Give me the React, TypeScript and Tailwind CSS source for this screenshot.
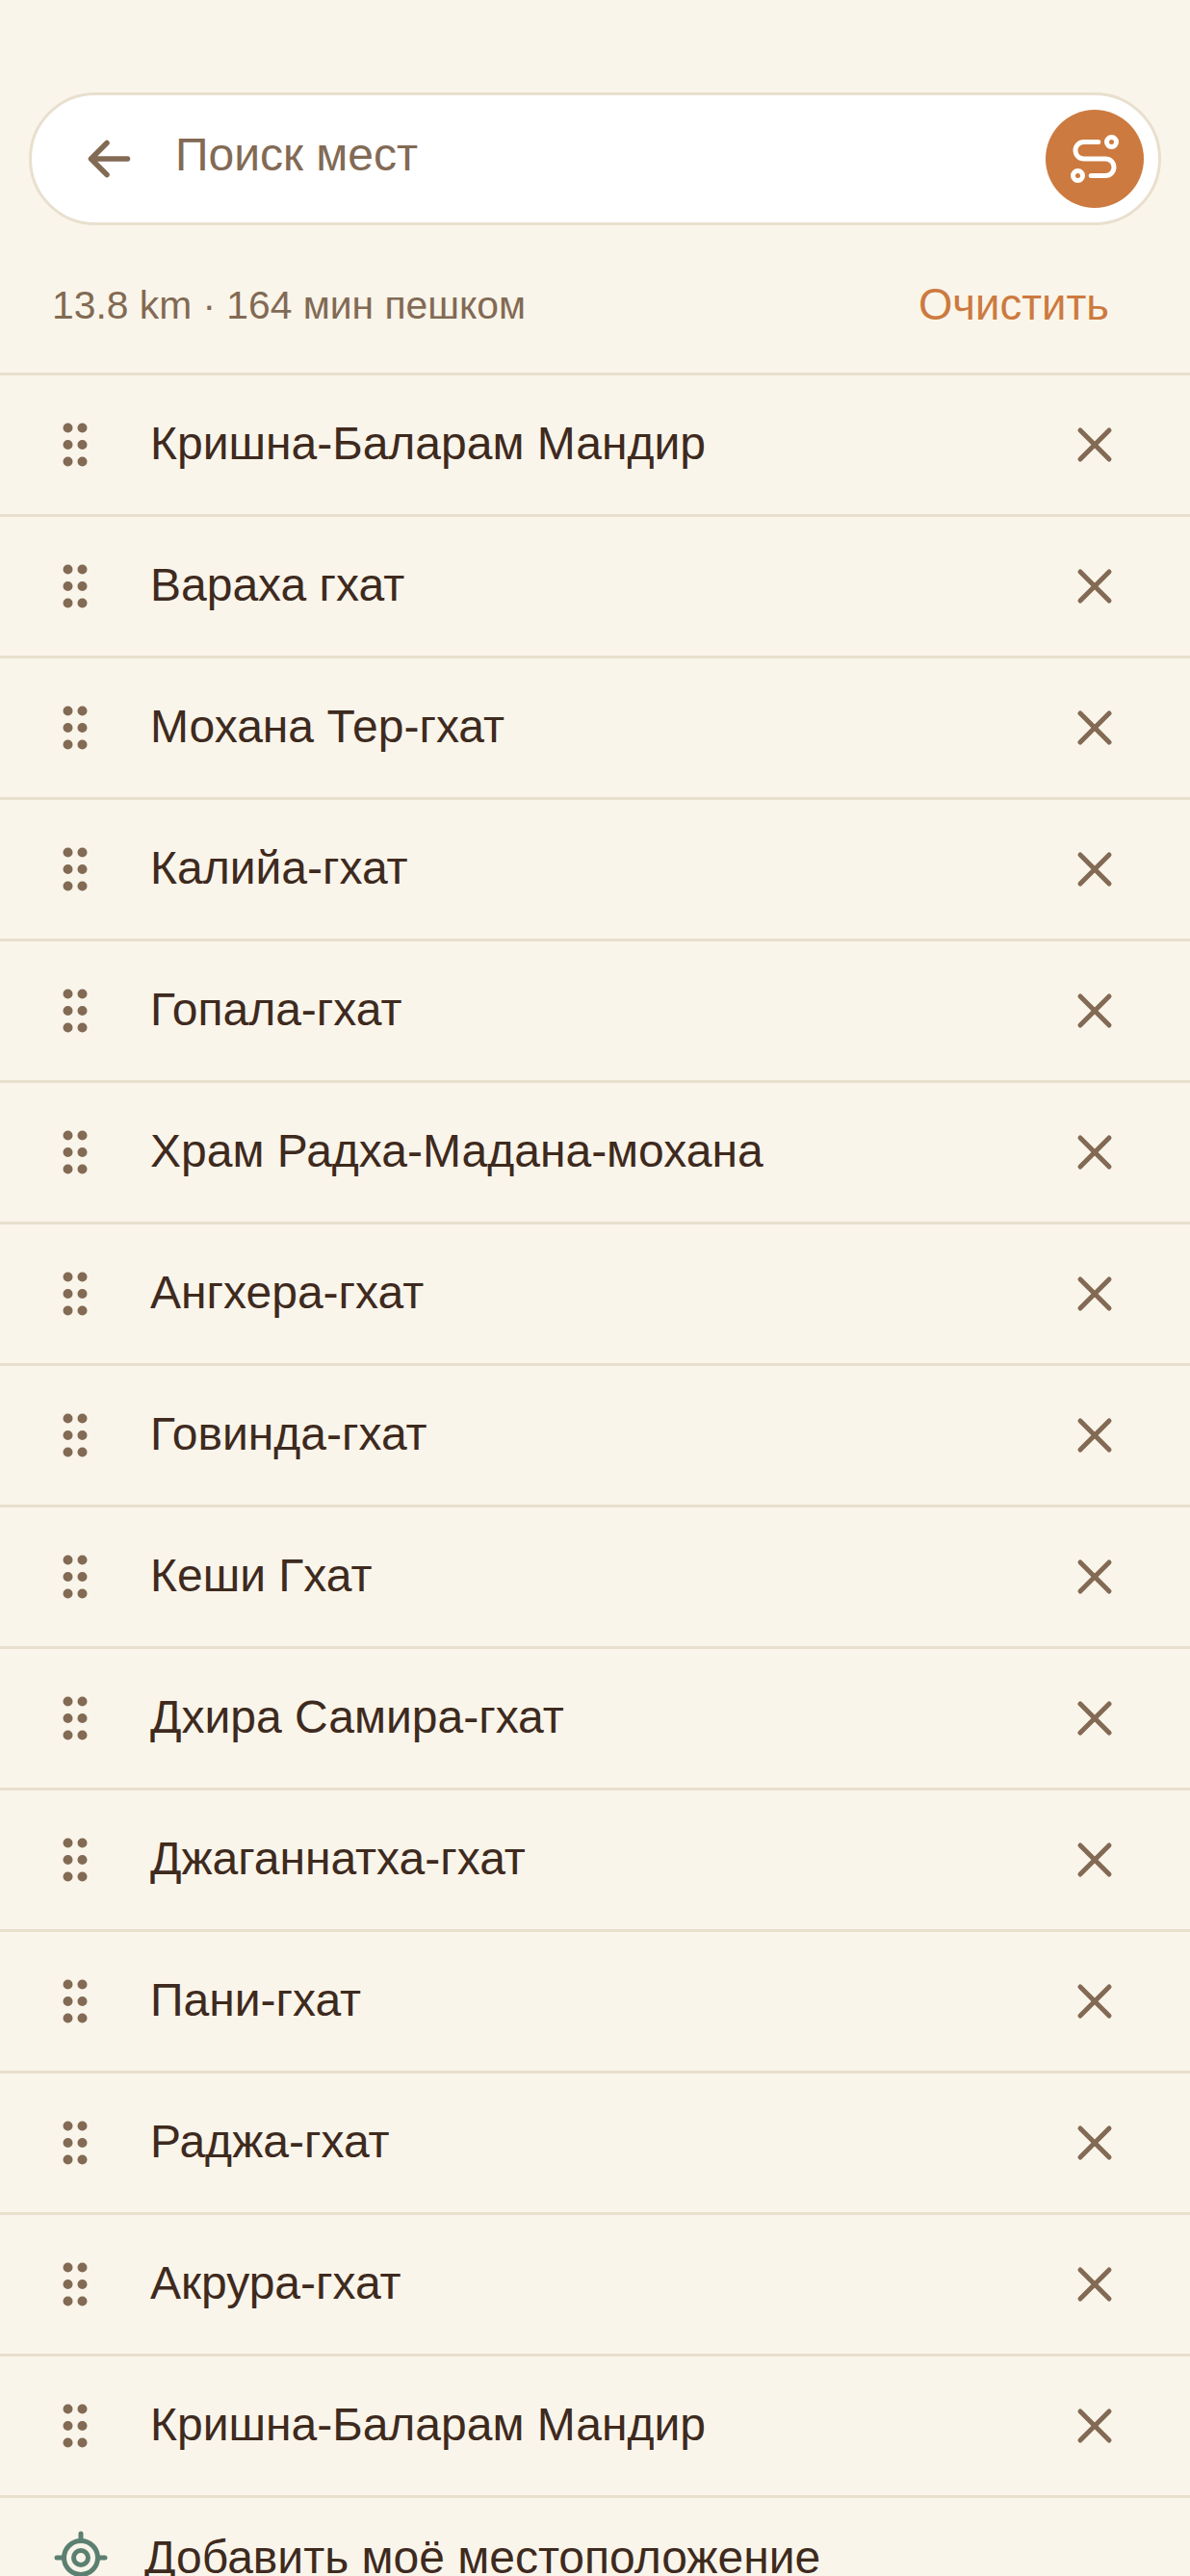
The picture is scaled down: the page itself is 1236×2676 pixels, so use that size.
import React from 'react';
import { GripVertical, LocateFixed, X } from 'lucide-react';

const stops = [
  'Кришна-Баларам Мандир',
  'Вараха гхат',
  'Мохана Тер-гхат',
  'Калийа-гхат',
  'Гопала-гхат',
  'Храм Радха-Мадана-мохана',
  'Ангхера-гхат',
  'Говинда-гхат',
  'Кеши Гхат',
  'Дхира Самира-гхат',
  'Джаганнатха-гхат',
  'Пани-гхат',
  'Раджа-гхат',
  'Акрура-гхат',
  'Кришна-Баларам Мандир',
];

const BackIcon = () => (
  <svg viewBox="0 0 24 24" className="h-[60px] w-[60px] shrink-0 text-[#826a54]" fill="none" stroke="currentColor" strokeWidth="2.2" strokeLinecap="round" strokeLinejoin="round">
    <path d="M19.8 12H4.6m6.6-6.6L4.6 12l6.6 6.6" />
  </svg>
);

// same shape as lucide's Route, but with smaller end dots and open gaps
const RouteIcon = () => (
  <svg viewBox="0 0 24 24" className="h-[60px] w-[60px]" fill="none" stroke="currentColor" strokeWidth="2" strokeLinecap="round">
    <circle cx="5" cy="19" r="2" />
    <path d="M10.5 19h6a3.5 3.5 0 0 0 0-7h-9a3.5 3.5 0 0 1 0-7h6" />
    <circle cx="19" cy="5" r="2" />
  </svg>
);

const App: React.FC = () => {
  return (
    <div className="h-[2676px] overflow-hidden bg-[#faf5ea] pt-[96px] font-['Liberation_Sans',Arial,sans-serif]">
      {/* Search bar */}
      <div className="ml-[30px] mr-[30px] flex h-[138px] items-center rounded-full border-[3px] border-[#e8dfce] bg-white pl-[50px] pr-[15px]">
        <BackIcon />
        <span className="ml-[39px] flex-1 pb-[9px] text-[48px] text-[#826a54]">Поиск мест</span>
        <button className="flex h-[102px] w-[102px] items-center justify-center rounded-full bg-[#cc7a3f] text-white">
          <RouteIcon />
        </button>
      </div>

      {/* Route summary */}
      <div className="flex h-[153px] items-center justify-between pl-[54px] pr-[84px] pt-[14px]">
        <span className="text-[40.8px] text-[#826a54]">13.8 km · 164 мин пешком</span>
        <button className="text-[45.5px] text-[#cc7a3f]">Очистить</button>
      </div>

      {/* Stops */}
      <div>
        {stops.map((name, idx) => (
          <div key={idx} className="flex h-[147px] items-center border-t-[3px] border-[#e8dfce] pl-[48px] pr-[69px]">
            <GripVertical className="h-[60px] w-[60px] shrink-0 text-[#826a54]" />
            <span className="ml-[48px] flex-1 pb-[2px] text-[48px] text-[#3e2a1e]">{name}</span>
            <X className="h-[60px] w-[60px] shrink-0 text-[#826a54]" />
          </div>
        ))}
        <div className="flex items-start border-t-[3px] border-[#e8dfce] pl-[54px] pt-[32px]">
          <LocateFixed className="h-[60px] w-[60px] shrink-0 text-[#5b8071]" />
          <span className="ml-[36px] text-[48px] leading-[60px] whitespace-nowrap text-[#3e2a1e]">Добавить моё местоположение</span>
        </div>
      </div>
    </div>
  );
};

export default App;
